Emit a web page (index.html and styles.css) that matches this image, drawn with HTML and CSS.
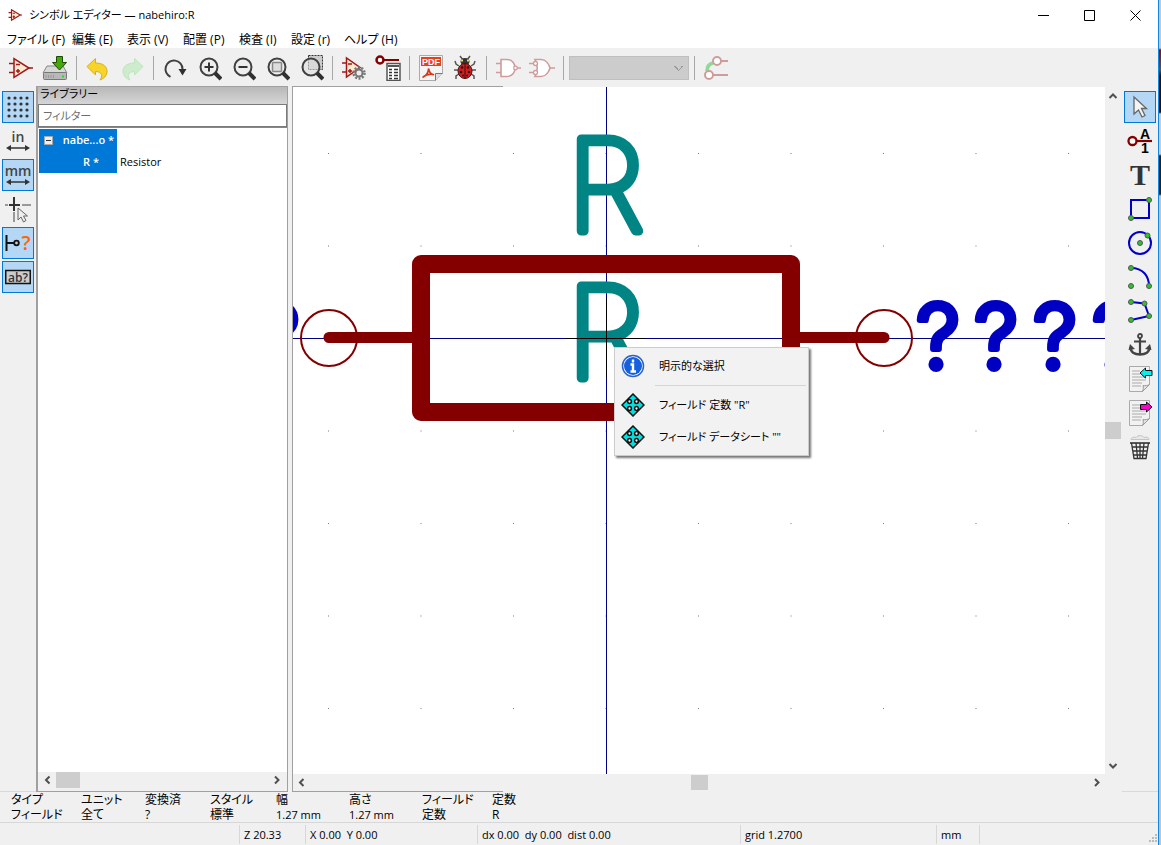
FILE: index.html
```html
<!DOCTYPE html>
<html lang="ja">
<head>
    <meta charset="UTF-8">
    <meta name="viewport" content="width=device-width, initial-scale=1.0">
    <title>シンボル エディター — nabehiro:R</title>
    <link rel="stylesheet" href="styles.css">
</head>
<body>
    <div class="window">
        <header class="titlebar">
            <svg class="app-icon" viewBox="0 0 24 24"><path d="M6 3v18l15-9z" fill="#fbe9d0" stroke="#a01818" stroke-width="2"/><path d="M1 8h5M1 16h5M21 12h3M8 9h4M8 15h4M10 13v4" stroke="#a01818" stroke-width="2"/></svg>
            <span class="title">シンボル エディター — nabehiro:R</span>
            <button class="win-btn" aria-label="最小化"><svg width="11" height="11"><path d="M0 5.500h11" stroke="#000"/></svg></button>
            <button class="win-btn" aria-label="最大化"><svg width="11" height="11"><path d="M.5.5h10v10H.5z" stroke="#000" fill="none"/></svg></button>
            <button class="win-btn" aria-label="閉じる"><svg width="11" height="11"><path d="M.5.5l10 10M10.500.5l-10 10" stroke="#000"/></svg></button>
        </header>

        <nav class="menubar">
            <button>ファイル (F)</button>
            <button>編集 (E)</button>
            <button>表示 (V)</button>
            <button>配置 (P)</button>
            <button>検査 (I)</button>
            <button>設定 (r)</button>
            <button>ヘルプ (H)</button>
        </nav>

        <div class="toolbar">
            <button aria-label="新規シンボル"><svg viewBox="0 0 26 26"><path d="M6 3.500v19L21 13z" fill="#fbe9d0" stroke="#a01818" stroke-width="1.500"/><path d="M1 8.500h5M1 17.500h5M21 13h4M8 9.500h4M8 16h4M10 14v4" stroke="#a01818" stroke-width="1.500"/></svg></button>
            <button aria-label="保存"><svg viewBox="0 0 26 26"><path d="M5 11h16l4 7H1z" fill="#d8d8d8" stroke="#888"/><rect x="1.500" y="17.500" width="23" height="7" rx="1" fill="#b8b8b8" stroke="#777"/><path d="M4 20v3M6.500 20v3M9 20v3M11.500 20v3" stroke="#999"/><path d="M20 21.500h2" stroke="#2d2" stroke-width="2"/><path d="M14.500 1.500h6v6h4L17.500 15l-7-7.500h4z" fill="#4a0" stroke="#1c4a04"/></svg></button>
            <span class="sep"></span>
            <button aria-label="元に戻す"><svg viewBox="1 -1 26 26"><path d="M3 10.500l8.500-8v4.500c8 0 12 4 11.500 9-.4 4-3 6.500-7 8 3-4 2-8.500-4.500-8.500V19z" fill="#f7d42a" stroke="#d9ad1c"/></svg></button>
            <button aria-label="やり直し"><svg viewBox="0 -1 26 26"><path d="M24 10.500l-8.500-8v4.500c-8 0-12 4-11.500 9 .4 4 3 6.500 7 8-3-4-2-8.500 4.500-8.500V19z" fill="#cdeccb" stroke="#bfe3bf"/></svg></button>
            <span class="sep"></span>
            <button aria-label="再描画"><svg viewBox="1 -1 26 26"><path d="M9.500 20.800A8.500 8.500 0 1 1 21.500 13" fill="none" stroke="#404040" stroke-width="2"/><path d="M17.500 13h8l-4 6.500z" fill="#303030"/></svg></button>
            <button aria-label="ズームイン"><svg viewBox="-2 -1 26 26"><circle cx="11" cy="11" r="8.500" fill="#eee" stroke="#404040" stroke-width="2"/><path d="M17 17l6 6" stroke="#303030" stroke-width="4"/><path d="M6.500 11h9M11 6.500v9" stroke="#333" stroke-width="2"/></svg></button>
            <button aria-label="ズームアウト"><svg viewBox="-2 -1 26 26"><circle cx="11" cy="11" r="8.500" fill="#eee" stroke="#404040" stroke-width="2"/><path d="M17 17l6 6" stroke="#303030" stroke-width="4"/><path d="M6.500 11h9" stroke="#333" stroke-width="2"/></svg></button>
            <button aria-label="全体表示"><svg viewBox="-2 -1 26 26"><circle cx="11" cy="11" r="8.500" fill="#eee" stroke="#404040" stroke-width="2"/><path d="M17 17l6 6" stroke="#303030" stroke-width="4"/><rect x="6.500" y="6.500" width="9" height="9" rx="1" fill="#ddd" stroke="#888" stroke-width="1.500"/></svg></button>
            <button aria-label="選択範囲をズーム"><svg viewBox="-2 0 26 26"><rect x="8.500" y=".5" width="14" height="14" fill="#ccc" stroke="#333" stroke-dasharray="2 1"/><circle cx="11" cy="12" r="8.500" fill="#ddd" fill-opacity=".6" stroke="#404040" stroke-width="2"/><path d="M17 18l6 6" stroke="#303030" stroke-width="4"/></svg></button>
            <span class="sep"></span>
            <button aria-label="シンボルのプロパティ"><svg viewBox="0 0 26 26"><path d="M5.500 3v19L19 12.500z" fill="#fbe9d0" stroke="#a01818" stroke-width="1.500"/><path d="M1 8h4.500M1 17h4.500M7 9h4M7 16h4M9 14v4" stroke="#a01818" stroke-width="1.500"/><circle cx="18" cy="18" r="5.500" fill="none" stroke="#777" stroke-width="2.500" stroke-dasharray="2 1.450"/><circle cx="18" cy="18" r="3.500" fill="#eee" stroke="#777" stroke-width="2"/></svg></button>
            <button aria-label="ピンテーブル"><svg viewBox="0 0 26 26"><circle cx="5" cy="5" r="3.500" fill="#fff" stroke="#840000" stroke-width="2.500"/><path d="M8.500 5H24" stroke="#840000" stroke-width="2"/><rect x="12" y="8.500" width="13" height="17" fill="#fff" stroke="#555" stroke-width="1.500"/><path d="M13 11h11" stroke="#555" stroke-width="2"/><path d="M14 14.500h3M19 14.500h4M14 17.500h3M19 17.500h4M14 20.500h3M19 20.500h4M14 23.500h3M19 23.500h4" stroke="#333" stroke-width="1.500"/></svg></button>
            <span class="sep"></span>
            <button aria-label="データシート"><svg viewBox="0 0 26 26"><path d="M1.500.5h23v18l-7 7h-16z" fill="#f4f4f4" stroke="#aaa"/><path d="M17.500 25.500v-7h7" fill="#ddd" stroke="#777"/><path d="M3 2h20v9H3z" fill="#e8401c"/><text x="13" y="10" text-anchor="middle" class="pdf-label">PDF</text><path d="M4.500 22.500c4-2 6-5 6-9 1 4 3 6.500 5.500 6-4-1-8 0-11.500 3" fill="none" stroke="#d8371a" stroke-width="1.600"/></svg></button>
            <button aria-label="シンボルチェッカー"><svg viewBox="0 0 26 26"><path d="M7 11L4 9 3 6M6 15H2M7 19l-3 2v3M19 11l3-2 1-3M20 15h4M19 19l3 2v3M8 1l3 4M18 1l-3 4" fill="none" stroke="#555" stroke-width="1.500"/><ellipse cx="13" cy="6.500" rx="4.500" ry="3.500" fill="#333"/><path d="M9 5.500h2M15 5.500h2" stroke="#e8dc60" stroke-width="2"/><ellipse cx="13" cy="16" rx="7" ry="7.500" fill="#d81c1c" stroke="#501010"/><path d="M13 8.500v15" stroke="#301010"/><g fill="#201010"><circle cx="10" cy="12.500" r="1.300"/><circle cx="16" cy="12.500" r="1.300"/><circle cx="9" cy="17" r="1.300"/><circle cx="17" cy="17" r="1.300"/><circle cx="11" cy="20.500" r="1"/><circle cx="15" cy="20.500" r="1"/></g></svg></button>
            <span class="sep"></span>
            <button disabled aria-label="標準形状"><svg viewBox="0 0 26 26"><path d="M6 4.500h6c6 0 8 5 8 8.500s-2 8.500-8 8.500H6z" fill="#fff" stroke="#cf9c9c" stroke-width="1.600"/><path d="M1 8.500h5M1 17.500h5M22 13h4" stroke="#cf9c9c" stroke-width="1.600"/><circle cx="20.500" cy="13" r="1.800" fill="#fff" stroke="#cf9c9c" stroke-width="1.300"/></svg></button>
            <button disabled aria-label="ド・モルガン形状"><svg viewBox="0 0 26 26"><path d="M6 4.500h6c5 0 8 5 9 8.500-1 3.500-4 8.500-9 8.500H6c3-5 3-12 0-17z" fill="#fff" stroke="#cf9c9c" stroke-width="1.600"/><path d="M0 8.500h5M0 17.500h5M21 13h5" stroke="#cf9c9c" stroke-width="1.600"/><circle cx="6.500" cy="8.500" r="2" fill="#fff" stroke="#cf9c9c" stroke-width="1.300"/><circle cx="6.500" cy="17.500" r="2" fill="#fff" stroke="#cf9c9c" stroke-width="1.300"/></svg></button>
            <span class="sep"></span>
            <select class="unit-select" disabled aria-label="ユニット"><option></option></select>
            <span class="sep"></span>
            <button disabled aria-label="ピンの同期編集"><svg viewBox="0 0 26 26"><path d="M17 6h8M9 20h16" stroke="#cf9c9c" stroke-width="2"/><path d="M4 16c0-5 2-7 6-8" fill="none" stroke="#8fd896" stroke-width="3.500"/><circle cx="14" cy="6" r="4" fill="#fff" stroke="#cf9c9c" stroke-width="2"/><circle cx="6" cy="20" r="4" fill="#fff" stroke="#cf9c9c" stroke-width="2"/></svg></button>
        </div>

        <main class="workspace">
            <div class="side-tools">
                <button class="on" aria-label="グリッド"><svg viewBox="0 0 26 26"><path d="M4 4h20M4 10h20M4 16h20M4 22h20" stroke="#333" stroke-width="3.200" stroke-linecap="round" stroke-dasharray="0 6"/></svg></button>
                <button aria-label="インチ"><svg viewBox="0 0 26 26"><text x="13" y="14" text-anchor="middle" class="unit-label">in</text><path d="M3 20h20" stroke="#333" stroke-width="1.500"/><path d="M1 20l5-3v6zM25 20l-5-3v6z" fill="#333"/></svg></button>
                <button class="on" aria-label="ミリメートル"><svg viewBox="0 0 26 26"><text x="13" y="14" text-anchor="middle" class="unit-label">mm</text><path d="M3 20h20" stroke="#333" stroke-width="1.500"/><path d="M1 20l5-3v6zM25 20l-5-3v6z" fill="#333"/></svg></button>
                <button aria-label="カーソル形状"><svg viewBox="0 0 26 26"><path d="M0 9h3M17 9h9M9 16v10" stroke="#999" stroke-width="2"/><path d="M4 9h11M9 1v14" stroke="#333" stroke-width="2"/><path d="M13 12v12l3-3 2.500 5 2.500-1.500-2.500-4.500h4z" fill="#eee" stroke="#666"/></svg></button>
                <button class="on" aria-label="ピンの電気的タイプ"><svg viewBox="0 0 26 26"><path d="M1.500 5v16M2 13h8" stroke="#111" stroke-width="2"/><circle cx="11.500" cy="13" r="2.300" fill="#ccc" stroke="#111" stroke-width="1.800"/><text x="21" y="20" text-anchor="middle" class="query">?</text></svg></button>
                <button class="on" aria-label="隠しフィールド"><svg viewBox="0 0 26 26"><rect x="0.750" y="6.500" width="24.500" height="13" fill="#ccc" stroke="#111" stroke-width="1.500"/><text x="13" y="18" text-anchor="middle" class="field-label">ab?</text></svg></button>
            </div>

            <section class="library">
                <h2>ライブラリー</h2>
                <input type="text" class="filter" placeholder="フィルター" aria-label="フィルター">
                <div class="tree">
                    <div class="tree-row"><span class="node"><svg width="9" height="9"><path d="M.5.5h8v8h-8z" fill="#eee" stroke="#aaa"/><path d="M2 4.500h5" stroke="#333"/></svg>nabe...o *</span></div>
                    <div class="tree-row"><span class="node leaf">R *</span><span class="desc">Resistor</span></div>
                </div>
                <div class="hscroll">
                    <svg width="17" height="16"><path d="M10.500 4.500L7 8l3.500 3.500" class="chevron"/></svg>
                    <span class="thumb"></span>
                    <svg class="end" width="17" height="16"><path d="M7 4.500L10.500 8 7 11.500" class="chevron"/></svg>
                </div>
            </section>

            <section class="editor">
                <div class="canvas">
                    <svg class="drawing" viewBox="293 87 812 687" preserveAspectRatio="xMinYMin slice">
                        <defs>
                            <pattern id="grid" x="328" y="153" width="92.500" height="92.500" patternUnits="userSpaceOnUse"><rect width="1" height="1" fill="#777"/></pattern>
                        </defs>
                        <rect x="293" y="87" width="812" height="687" fill="url(#grid)"/>
                        <path d="M606.500 87v687M293 338.500h812" stroke="#000084"/>
                        <g class="body">
                            <rect x="421" y="264" width="370" height="148" stroke-width="18"/>
                            <path d="M329 337.500h92M791 337.500h93" stroke-width="11"/>
                            <circle cx="329" cy="338" r="28" stroke-width="2"/>
                            <circle cx="884" cy="338" r="28" stroke-width="2"/>
                        </g>
                        <text class="field" x="567" y="231">R</text>
                        <text class="field" x="567" y="378">R</text>
                        <text class="pin-name" x="256" y="368">?</text>
                        <text class="pin-name" x="916 974 1033 1092" y="368">????</text>
                        <path d="M566 338.500h80M606.500 298v80" stroke="#000"/>
                    </svg>
                    <div class="popup">
                        <button><svg viewBox="0 0 24 24"><circle cx="12" cy="12" r="10.500" fill="#fff" stroke="#2a62c8" stroke-width="1.500"/><circle cx="12" cy="12" r="9" fill="#1560e0"/><path d="M12 5.500v3M9.500 10.500H12v7M9.500 17.500h5.500" stroke="#fff" stroke-width="2.400" fill="none"/></svg>明示的な選択</button>
                        <hr>
                        <button><svg viewBox="0 0 24 24"><use href="#move"/></svg>フィールド 定数 "R"</button>
                        <button><svg viewBox="0 0 24 24"><use href="#move"/></svg>フィールド データシート ""</button>
                    </div>
                </div>
                <div class="vscroll">
                    <svg width="17" height="17"><path d="M4.500 11L8 7.500l3.500 3.500" class="chevron"/></svg>
                    <span class="thumb"></span>
                    <svg width="17" height="17"><path d="M4.500 7L8 10.500 11.500 7" class="chevron"/></svg>
                </div>
                <div class="hscroll">
                    <svg width="17" height="17"><path d="M10.500 5L7 8.500l3.500 3.500" class="chevron"/></svg>
                    <span class="thumb"></span>
                    <svg width="17" height="17"><path d="M7 5l3.500 3.500L7 12" class="chevron"/></svg>
                </div>
            </section>

            <div class="side-tools">
                <button class="on" aria-label="選択"><svg viewBox="0 0 26 26"><path d="M7 3v17l4.500-4 3.500 7 3-1.500-3.500-7h5z" fill="#f4f4f4" stroke="#666" stroke-width="1.300"/></svg></button>
                <button aria-label="ピンを追加"><svg viewBox="0 0 26 26"><path d="M10 13h15" stroke="#840000" stroke-width="2.200"/><circle cx="5.500" cy="13" r="4" fill="#fff" stroke="#840000" stroke-width="2.300"/><text x="18" y="10.500" text-anchor="middle" class="pin-label">A</text><text x="18" y="25" text-anchor="middle" class="pin-label">1</text></svg></button>
                <button aria-label="テキストを追加"><svg viewBox="0 0 26 26"><text x="13" y="23" text-anchor="middle" class="big-t">T</text></svg></button>
                <button aria-label="矩形を追加"><svg viewBox="0 0 26 26"><path d="M4 4h18v18H4z" fill="none" stroke="#0000c8" stroke-width="2"/><g class="dots"><circle cx="22" cy="4" r="2.500"/><circle cx="4" cy="22" r="2.500"/></g></svg></button>
                <button aria-label="円を追加"><svg viewBox="0 0 26 26"><circle cx="13" cy="13" r="11" fill="none" stroke="#0000c8" stroke-width="2"/><g class="dots"><circle cx="13" cy="13" r="2.500"/><circle cx="20.500" cy="5.500" r="2.500"/></g></svg></button>
                <button aria-label="円弧を追加"><svg viewBox="0 0 26 26"><path d="M4 4c12 0 18 8 18 18" fill="none" stroke="#0000c8" stroke-width="2"/><g class="dots"><circle cx="4" cy="4" r="2.500"/><circle cx="4" cy="22" r="2.500"/><circle cx="22" cy="22" r="2.500"/></g></svg></button>
                <button aria-label="線を追加"><svg viewBox="0 0 26 26"><path d="M4 4l13.500 1.500L22 18 4 22" fill="none" stroke="#0000c8" stroke-width="2"/><g class="dots"><circle cx="4" cy="4" r="2.500"/><circle cx="17.500" cy="5.500" r="2.500"/><circle cx="22" cy="18" r="2.500"/><circle cx="4" cy="22" r="2.500"/></g></svg></button>
                <button aria-label="アンカーを移動"><svg viewBox="0 0 26 26"><circle cx="13" cy="4" r="2" fill="none" stroke="#444" stroke-width="1.800"/><path d="M13 6v16M7 9.500h12" stroke="#444" stroke-width="2.200"/><path d="M3.500 15c0 5 4 7.500 9.500 7.500s9.500-2.500 9.500-7.500" fill="none" stroke="#444" stroke-width="2.600"/><path d="M1.500 18l1.500-6 5 5zM24.500 18L23 12l-5 5z" fill="#444"/></svg></button>
                <button aria-label="インポート"><svg viewBox="0 0 26 26"><use href="#sheet"/><path d="M13 7l5.500-5v2.500H25v5h-6.500V12z" fill="#00f0f0" stroke="#111"/></svg></button>
                <button aria-label="エクスポート"><svg viewBox="0 0 26 26"><use href="#sheet"/><path d="M25 7l-5.500-5v2.500h-6v5h6V12z" fill="#f0c" stroke="#111"/></svg></button>
                <button aria-label="削除"><svg viewBox="0 0 26 26"><path d="M4 5.500c0-2 3-3 5-2 2-3 7-2 8 0 3-1 5 0 5 2z" fill="#e8e8e8" stroke="#c4c4c4"/><path d="M3 9h20" stroke="#333" stroke-width="1.600"/><path d="M4.500 9l2.500 15.500h12L21.500 9M9 9l1.500 15M13 9v15M17 9l-1.500 15M5 13h16M6 17h14M7 21h12" fill="none" stroke="#333" stroke-width="1.300"/></svg></button>
            </div>
        </main>

        <dl class="messages">
            <div><dt>タイプ</dt><dd>フィールド</dd></div>
            <div><dt>ユニット</dt><dd>全て</dd></div>
            <div><dt>変換済</dt><dd>?</dd></div>
            <div><dt>スタイル</dt><dd>標準</dd></div>
            <div><dt>幅</dt><dd class="num">1.27 mm</dd></div>
            <div><dt>高さ</dt><dd class="num">1.27 mm</dd></div>
            <div><dt>フィールド</dt><dd>定数</dd></div>
            <div><dt>定数</dt><dd>R</dd></div>
        </dl>

        <footer class="statusbar">
            <span></span>
            <span>Z 20.33</span>
            <span>X 0.00&nbsp; Y 0.00</span>
            <span>dx 0.00&nbsp; dy 0.00&nbsp; dist 0.00</span>
            <span>grid 1.2700</span>
            <span>mm</span>
            <span class="grip"><svg width="10" height="10" fill="#bbb"><path d="M7 0h2v2H7zM4 3h2v2H4zM7 3h2v2H7zM1 6h2v2H1zM4 6h2v2H4zM7 6h2v2H7z"/></svg></span>
        </footer>
    </div>
    <div class="desktop-edge"></div>

    <svg class="symbols">
        <symbol id="move" viewBox="0 0 24 24"><path d="M12 1l11 11-11 11L1 12z" fill="#00e0e0" stroke="#111" stroke-width="1.500"/><path d="M12 5v14M5 12h14" stroke="#00e0e0" stroke-width="3"/><g fill="#eee" stroke="#111" stroke-width="1.500"><circle cx="8.500" cy="8.500" r="1.900"/><circle cx="15.500" cy="8.500" r="1.900"/><circle cx="8.500" cy="15.500" r="1.900"/><circle cx="15.500" cy="15.500" r="1.900"/></g></symbol>
        <symbol id="sheet" viewBox="0 0 26 26"><path d="M2.500.5h20v18l-7 7h-13z" fill="#f2f2f2" stroke="#aaa"/><path d="M15.500 25.500c1-2 1-4 .5-6 2 .5 5 0 6.500-1z" fill="#e4e4e4" stroke="#999"/><path d="M5 5h8M5 8h8M5 11h14M5 14h14M5 17h10M5 20h9" stroke="#aaa"/></symbol>
    </svg>
</body>
</html>
```

FILE: styles.css
```css
* {
    box-sizing: border-box;
}

body {
    display: flex;
    height: 100vh;
    margin: 0;
    overflow: hidden;
    background-color: #f0f0f0;
    color: #000;
    font-family: "Open Sans", "Noto Sans CJK JP", sans-serif;
    font-size: 12px;
    line-height: 16px;
    font-feature-settings: "palt";
}

button {
    display: flex;
    align-items: center;
    justify-content: center;
    padding: 0;
    border: none;
    background: none;
    color: inherit;
    font: inherit;
    font-feature-settings: inherit;
}

svg {
    display: block;
    flex: none;
}

.window {
    display: flex;
    flex-direction: column;
    flex: 1;
    min-width: 0;
    border-right: 1px solid #0a8ae6;
}

.desktop-edge {
    width: 2px;
    background: linear-gradient(#c8c8c8 48px, #a00 50px, #555 70px, #111 76px, #111 112px, #ccc 114px, #ccc 154px, #222 156px, #222 194px, #c4c4c4 196px);
}

.symbols {
    display: none;
}

/* title bar and menus */

.titlebar {
    display: flex;
    align-items: center;
    height: 30px;
    padding-left: 8px;
    background-color: #fff;
}

.app-icon {
    width: 14px;
    height: 14px;
    margin-right: 7px;
}

.title {
    flex: 1;
    font-size: 11px;
}

.win-btn {
    width: 46px;
    height: 30px;
}

.menubar {
    display: grid;
    grid-template-columns: 65px 55px 56px 56px 52px 53px auto;
    justify-content: start;
    height: 18px;
    padding: 2px 0 0 7px;
    background-color: #fff;
}

.menubar button {
    justify-content: flex-start;
    height: 16px;
    white-space: nowrap;
}

.toolbar {
    display: flex;
    align-items: center;
    height: 38px;
    padding: 2px 4px 0;
}

.toolbar button {
    width: 34px;
    height: 34px;
}

.toolbar svg {
    width: 26px;
    height: 26px;
}

.sep {
    width: 1px;
    height: 24px;
    margin: 0 4px;
    background-color: #a8a8a8;
}

.pdf-label {
    font: bold 9px "Liberation Sans", sans-serif;
    fill: #fff;
}

.unit-select {
    width: 120px;
    height: 24px;
    margin: 0 1px;
    appearance: none;
    border: 1px solid #bfbfbf;
    border-radius: 0;
    background-color: #ccc;
    background-image: linear-gradient(45deg, transparent 45%, #999 45%, #999 60%, transparent 60%), linear-gradient(-45deg, transparent 45%, #999 45%, #999 60%, transparent 60%);
    background-repeat: no-repeat;
    background-size: 5px 5px;
    background-position: right 9px center, right 5px center;
    opacity: 1;
}

/* main area */

.workspace {
    display: flex;
    flex: 1;
    min-height: 0;
}

.side-tools {
    display: flex;
    flex-direction: column;
    gap: 2px;
    width: 36px;
    padding: 5px 2px;
    border-bottom: 1px solid #d9d9d9;
}

.side-tools button {
    width: 32px;
    height: 32px;
}

.side-tools .on {
    border: 1px solid #0078d7;
    background-color: #b3d7f5;
}

.side-tools svg {
    width: 26px;
    height: 26px;
    overflow: visible;
}

.unit-label {
    font: 600 14px "Open Sans", sans-serif;
    fill: #444;
}

.query {
    font: 600 20px "Open Sans", sans-serif;
    fill: #f60;
}

.field-label {
    font: 600 12px "Open Sans", sans-serif;
    fill: #333;
}

.pin-label {
    font: bold 14px "Liberation Sans", sans-serif;
}

.big-t {
    font: bold 30px "Liberation Serif", serif;
    fill: #333;
}

.dots {
    fill: #2fc030;
    stroke: #555;
}

.library {
    display: flex;
    flex-direction: column;
    width: 252px;
    border: solid #a0a0a0;
    border-width: 1px 1px 1px 2px;
}

.library h2 {
    height: 17px;
    margin: 0;
    padding-left: 2px;
    background: linear-gradient(#b8b8b8, #d6d6d6);
    font-size: 11px;
    font-weight: normal;
    line-height: 14px;
}

.filter {
    height: 23px;
    padding: 0 4px;
    border: 1px solid #7a7a7a;
    font: inherit;
    font-size: 11px;
    font-feature-settings: inherit;
}

.filter::placeholder {
    color: #6d6d6d;
}

.tree {
    flex: 1;
    padding: 1px;
    border-top: 1px solid #828790;
    background-color: #fff;
}

.tree-row {
    display: flex;
    align-items: center;
    height: 22px;
}

.node {
    display: flex;
    align-items: center;
    justify-content: flex-end;
    gap: 10px;
    width: 78px;
    height: 22px;
    padding-right: 3px;
    background-color: #0078d7;
    color: #fff;
    font-size: 11px;
    font-weight: 600;
}

.leaf {
    padding-right: 18px;
}

.desc {
    padding-left: 3px;
    font-size: 11px;
}

.chevron {
    fill: none;
    stroke: #505050;
    stroke-width: 2;
}

.hscroll {
    display: flex;
    align-items: center;
    background-color: #f0f0f0;
}

.thumb {
    background-color: #cdcdcd;
}

.library .hscroll {
    height: 16px;
    margin: 0 2px 3px 1px;
}

.library .thumb {
    width: 24px;
    height: 16px;
}

.end {
    margin-left: auto;
}

.editor {
    display: grid;
    grid-template-columns: 1fr 17px;
    grid-template-rows: 1fr 17px;
    flex: 1;
    min-width: 0;
    margin-left: 4px;
    border: solid #a0a0a0;
    border-width: 1px 0 1px 1px;
    border-image: linear-gradient(90deg, #a0a0a0 211px, #f0f0f0 211px) 1;
}

.canvas {
    position: relative;
    min-width: 0;
    min-height: 0;
    background-color: #fff;
}

.drawing {
    width: 100%;
    height: 100%;
}

.body {
    fill: none;
    stroke: #840000;
    stroke-linecap: round;
    stroke-linejoin: round;
}

.field {
    font: 100 126px Inter, sans-serif;
    fill: #008484;
    stroke: #008484;
    stroke-width: 9px;
    stroke-linejoin: round;
}

.pin-name {
    font: 300 88px Inter, sans-serif;
    fill: #0000c2;
    stroke: #0000c2;
    stroke-width: 6px;
    stroke-linejoin: round;
}

.vscroll {
    display: flex;
    flex-direction: column;
}

.vscroll .thumb {
    width: 16px;
    height: 17px;
    margin: auto 0;
}

.editor .hscroll .thumb {
    width: 17px;
    height: 15px;
    margin: 0 auto;
}

.popup {
    position: absolute;
    top: 260px;
    left: 321px;
    width: 195px;
    padding: 2px;
    border: 1px solid #ccc;
    background-color: #f2f2f2;
    box-shadow: 2px 2px 2px #777;
    font-size: 11px;
}

.popup button {
    justify-content: flex-start;
    gap: 14px;
    width: 100%;
    height: 32px;
    padding-left: 4px;
}

.popup svg {
    width: 24px;
    height: 24px;
}

.popup hr {
    margin: 3px 0 3px 38px;
    border: none;
    border-top: 1px solid #d5d5d5;
}

/* bottom bars */

.messages {
    display: grid;
    grid-template-columns: 70px 64px 65px 66px 73px 73px 70px 1fr;
    height: 30px;
    margin: 0;
    padding-left: 11px;
    line-height: 15px;
}

.messages dd {
    margin: 0;
}

.messages .num {
    font-size: 11px;
}

.statusbar {
    display: grid;
    grid-template-columns: 240px 66px 172px 263px 196px 43px 1fr;
    height: 23px;
    padding: 2px 0;
    border-top: 1px solid #d7d7d7;
    font-size: 11px;
    line-height: 19px;
}

.statusbar span {
    padding-left: 4px;
    border-right: 1px solid #d7d7d7;
}

.statusbar .grip {
    display: flex;
    align-items: flex-end;
    justify-content: flex-end;
    border: none;
}
```
